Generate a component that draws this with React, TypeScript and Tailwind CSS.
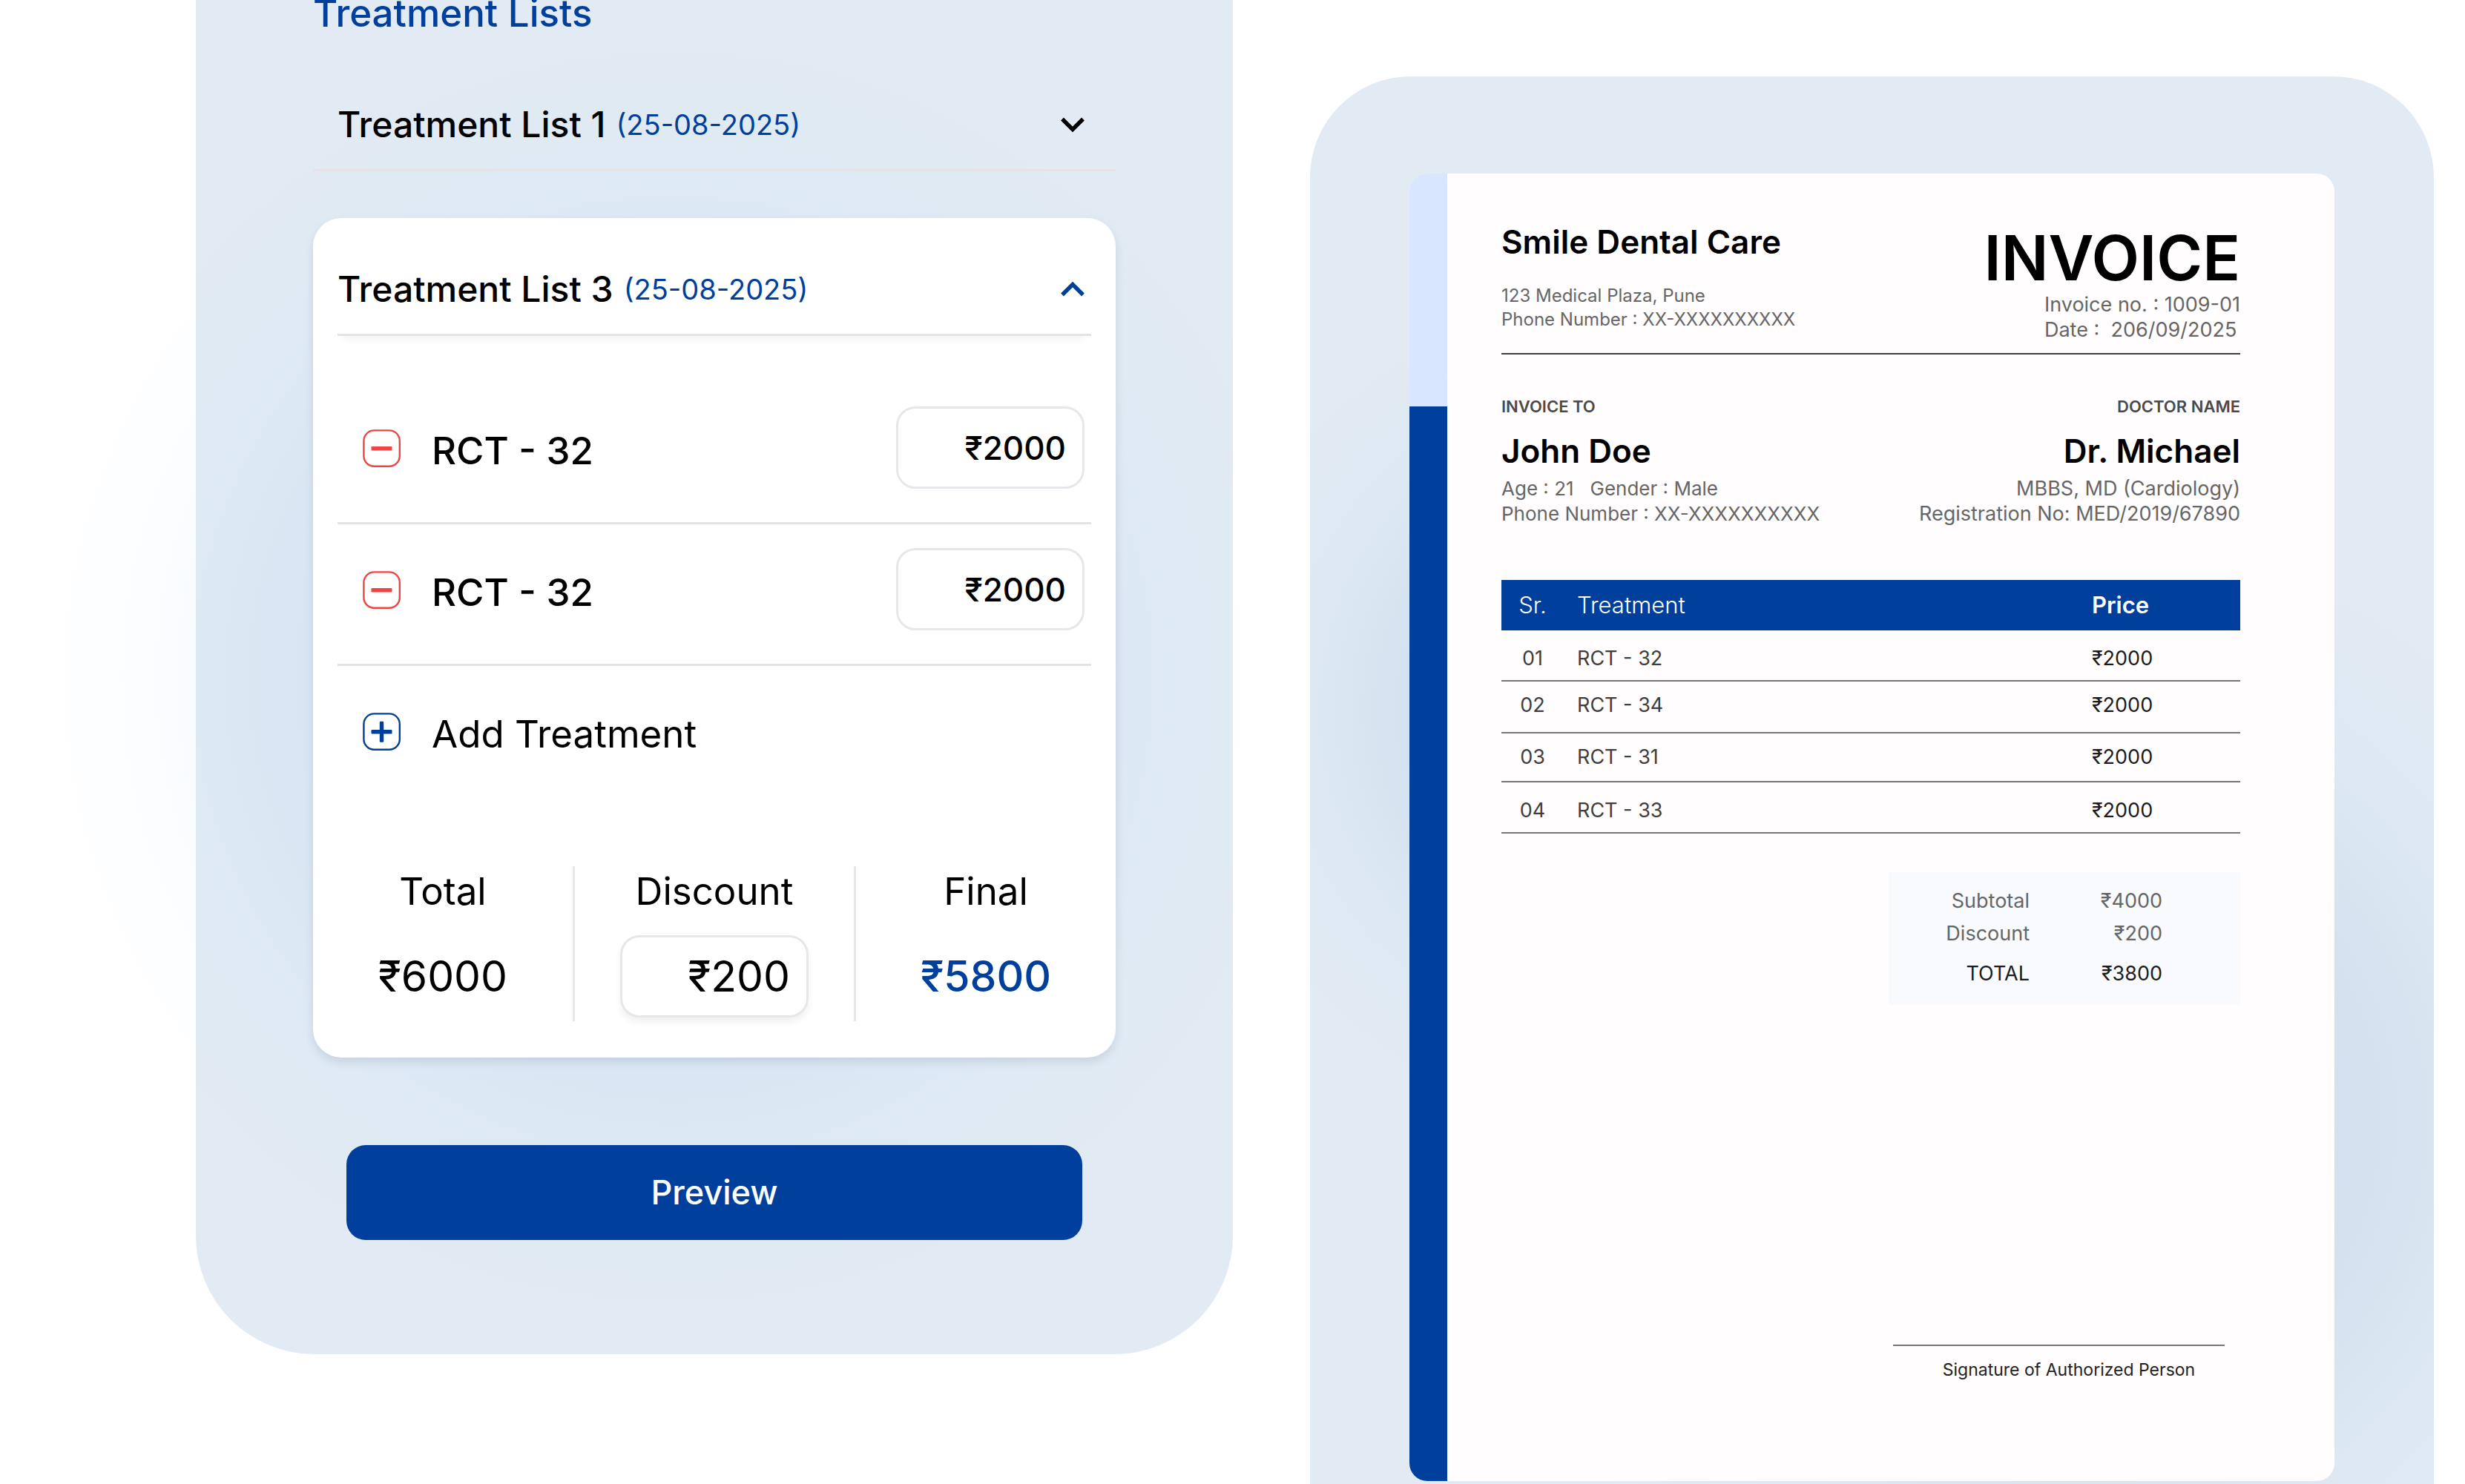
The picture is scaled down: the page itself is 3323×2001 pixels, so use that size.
import { useState } from 'react'

interface ListHeaderProps {
  title: string
  date: string
  open: boolean
  onToggle: () => void
}

const treatments = [
  { id: 'treatment-1', name: 'RCT - 32', price: '₹2000' },
  { id: 'treatment-2', name: 'RCT - 32', price: '₹2000' },
]

const invoiceRows = [
  { sr: '01', name: 'RCT - 32', price: '₹2000', pad: 'pt-[22px] pb-[13px]' },
  { sr: '02', name: 'RCT - 34', price: '₹2000', pad: 'pt-[16px] pb-[20px]' },
  { sr: '03', name: 'RCT - 31', price: '₹2000', pad: 'pt-[16px] pb-[16px]' },
  { sr: '04', name: 'RCT - 33', price: '₹2000', pad: 'pt-[22px] pb-[13px]' },
]

function Chevron({ up }: { up: boolean }) {
  return (
    <svg width="32" height="20" viewBox="0 0 32 20" fill="none" className={up ? 'text-[#00409c]' : 'text-black'}>
      <path d={up ? 'M2 17.5L16 3.5L30 17.5' : 'M2 2.5L16 16.5L30 2.5'} stroke="currentColor" strokeWidth="5.4" />
    </svg>
  )
}

function SquareIcon({ plus }: { plus?: boolean }) {
  return (
    <svg width="51" height="51" viewBox="0 0 51 51" fill="none" className={plus ? 'text-[#00409c]' : 'text-[#ef4444]'}>
      <rect x="1.4" y="1.4" width="48.4" height="48.4" rx="14" stroke="currentColor" strokeWidth="2.4" />
      <rect x="11.5" y="23" width="28" height="5.4" rx="1.2" fill="currentColor" />
      {plus && <rect x="22.8" y="11.7" width="5.4" height="28" rx="1.2" fill="currentColor" />}
    </svg>
  )
}

function ListHeader({ title, date, open, onToggle }: ListHeaderProps) {
  return (
    <button type="button" aria-expanded={open} onClick={onToggle} className="flex w-full items-center justify-between pb-7 pr-[9px] text-left">
      <span className="flex items-center gap-[14px]">
        <span className="text-[48px] leading-[64px] font-medium text-black">{title}</span>
        <span className="text-[38px] leading-[64px] text-[#00409c]">{date}</span>
      </span>
      <Chevron up={open} />
    </button>
  )
}

function TreatmentPanel() {
  const [firstOpen, setFirstOpen] = useState(false)
  const [thirdOpen, setThirdOpen] = useState(true)

  return (
    <section className="self-start rounded-b-[160px] bg-[#e2eaf3] bg-[radial-gradient(circle_at_46%_50%,#cfe1f6_0,#d7e5f4_460px,#dce8f3_620px,#e0eaf3_730px,#e2eaf3_880px)] px-[158px] pb-[154px]">
      <h2 className="-mt-3 text-[51px] leading-[60px] font-medium text-[#00409c]">Treatment Lists</h2>

      <div className="mt-[88px] border-b-[3px] border-[#e5e3e5] px-[33px]">
        <ListHeader title="Treatment List 1" date="(25-08-2025)" open={firstOpen} onToggle={() => setFirstOpen(!firstOpen)} />
      </div>

      <div className="mt-[63px] rounded-[38px] bg-white pt-16 pb-[49px] shadow-[0_6px_12px_rgba(60,80,120,0.14)]">
        <div className="px-[33px]">
          <div className="border-b-[3px] border-[#e3e3e3] shadow-[0_12px_12px_-8px_rgba(0,0,0,0.05)]">
            <ListHeader title="Treatment List 3" date="(25-08-2025)" open={thirdOpen} onToggle={() => setThirdOpen(!thirdOpen)} />
          </div>

          <ul className="mt-[63px]">
            {treatments.map(t => (
              <li key={t.id} className="flex items-start justify-between border-b-[3px] border-[#e3e3e3] pt-8 pr-[9px] pb-[45px] pl-[34px]">
                <div className="flex items-start gap-[42px] pt-[31px]">
                  <button type="button" aria-label="Remove treatment">
                    <SquareIcon />
                  </button>
                  <label htmlFor={t.id} className="text-[51px] leading-[58px] font-medium text-black">{t.name}</label>
                </div>
                <input
                  id={t.id}
                  defaultValue={t.price}
                  className="h-[111px] w-[254px] rounded-[26px] border-[3px] border-[#e5e7eb] bg-white pr-[22px] text-right text-[44px] font-medium text-black outline-none"
                />
              </li>
            ))}
          </ul>

          <button type="button" className="mt-[63px] flex items-start gap-[42px] pl-[34px]">
            <SquareIcon plus />
            <span className="text-[51px] leading-[58px] text-black">Add Treatment</span>
          </button>
        </div>

        <div className="mt-[149px] grid grid-cols-[175fr_191fr_175fr] text-center text-black">
          <div className="pt-1">
            <div className="text-[51px] leading-[60px]">Total</div>
            <div className="mt-[29px] text-[57px] leading-[111px]">₹6000</div>
          </div>
          <div className="border-x-[3px] border-[#e5e7eb] pt-1 pb-[5px]">
            <label htmlFor="discount" className="block text-[51px] leading-[60px]">Discount</label>
            <input
              id="discount"
              defaultValue="₹200"
              className="mt-[29px] h-[111px] w-[254px] rounded-[26px] border-[3px] border-[#e5e7eb] bg-white pr-[22px] text-right text-[57px] shadow-[0_6px_10px_rgba(0,0,0,0.06)] outline-none"
            />
          </div>
          <div className="pt-1">
            <div className="text-[51px] leading-[60px]">Final</div>
            <div className="mt-[29px] text-[57px] leading-[111px] font-medium text-[#00409c]">₹5800</div>
          </div>
        </div>
      </div>

      <div className="mt-[118px] px-[45px]">
        <button type="button" className="h-32 w-full rounded-[26px] bg-[#00409c] text-[45px] font-medium text-white">
          Preview
        </button>
      </div>
    </section>
  )
}

function InvoiceSheet() {
  return (
    <article className="flex flex-1 overflow-hidden rounded-3xl bg-[#fffdfe]">
      <div className="w-[51px] bg-linear-to-b from-[#d8e7ff] from-[314px] to-[#00409c] to-[314px]" />

      <div className="flex flex-1 flex-col pr-[127px] pb-[134px] pl-[73px] text-[#666666]">
        <header className="flex justify-between border-b-2 border-[#3e3c3d] pb-[14px]">
          <div className="pt-[67px]">
            <h1 className="text-[44px] leading-[50px] font-semibold text-black">Smile Dental Care</h1>
            <div className="pt-[32px] text-[24px] leading-[32px]">
              <p>123 Medical Plaza, Pune</p>
              <p>Phone Number : XX-XXXXXXXXXX</p>
            </div>
          </div>
          <div className="flex flex-col items-end pt-[68px]">
            <p className="text-[84px] leading-[92px] font-semibold text-black">INVOICE</p>
            <div className="text-[27px] leading-[34px]">
              <p>Invoice no. : 1009-01</p>
              <p className="whitespace-pre">Date :  206/09/2025</p>
            </div>
          </div>
        </header>

        <div className="flex justify-between pt-[54px]">
          <div>
            <h2 className="text-[22px] leading-[32px] font-semibold text-[#4a4a4a]">INVOICE TO</h2>
            <p className="pt-[19px] text-[44px] leading-[50px] font-semibold text-black">John Doe</p>
            <p className="pt-[9px] text-[26px] leading-[34px] whitespace-pre">Age : 21   Gender : Male</p>
            <p className="text-[26px] leading-[34px]">Phone Number : XX-XXXXXXXXXX</p>
          </div>
          <div className="text-right">
            <h2 className="text-[22px] leading-[32px] font-semibold text-[#4a4a4a]">DOCTOR NAME</h2>
            <p className="pt-[19px] text-[44px] leading-[50px] font-semibold text-black">Dr. Michael</p>
            <p className="pt-[9px] text-[27px] leading-[34px]">MBBS, MD (Cardiology)</p>
            <p className="text-[27px] leading-[34px]">Registration No: MED/2019/67890</p>
          </div>
        </div>

        <table className="mt-[72px] w-full table-fixed border-collapse text-left text-[27px] leading-[32px] text-[#3f3f3f]">
          <thead>
            <tr className="h-[68px] bg-[#00409c] text-[31px] text-white">
              <th className="w-[84px] text-center font-light">Sr.</th>
              <th className="pl-[18px] font-light">Treatment</th>
              <th className="w-[200px] font-semibold">Price</th>
            </tr>
          </thead>
          <tbody>
            {invoiceRows.map(row => (
              <tr key={row.sr} className="border-b-2 border-[#777576]">
                <td className={`${row.pad} text-center`}>{row.sr}</td>
                <td className={`${row.pad} pl-[18px]`}>{row.name}</td>
                <td className={`${row.pad} text-[#1c1c1c]`}>{row.price}</td>
              </tr>
            ))}
          </tbody>
        </table>

        <dl className="mt-[52px] grid w-[474px] grid-cols-[190px_179px] self-end bg-[#f8fafd] pt-[17px] pb-[20px] text-right text-[27px] leading-[44px]">
          <dt>Subtotal</dt>
          <dd>₹4000</dd>
          <dt>Discount</dt>
          <dd>₹200</dd>
          <dt className="pt-[10px] text-[#1c1c1c]">TOTAL</dt>
          <dd className="pt-[10px] text-[#1c1c1c]">₹3800</dd>
        </dl>

        <div className="mt-auto mr-[21px] w-[447px] self-end border-t-2 border-[#777576] pt-[16px] pl-[27px] text-center text-[23px] leading-[32px] text-[#222222]">
          Signature of Authorized Person
        </div>
      </div>
    </article>
  )
}

export default function App() {
  return (
    <main className="grid min-h-screen grid-cols-[1398fr_1515fr] gap-[104px] overflow-hidden bg-white bg-[radial-gradient(circle_at_880px_915px,#f4f8ff_0,#f8fbff_600px,#fdfeff_740px,#ffffff_850px)] pr-[42px] pl-[264px] font-['Inter',sans-serif]">
      <TreatmentPanel />
      <section className="mt-[103px] flex flex-col rounded-t-[136px] bg-[#e2eaf3] bg-[radial-gradient(circle_at_28%_45%,#c9dbed_0%,#d3e1ef_18%,#dde8f2_28%,#e2eaf300_38%),radial-gradient(circle_at_68%_74%,#c9dbed_0%,#d3e1ef_22%,#dde8f2_34%,#e2eaf300_46%)] px-[134px] pt-[131px] pb-1">
        <InvoiceSheet />
      </section>
    </main>
  )
}
